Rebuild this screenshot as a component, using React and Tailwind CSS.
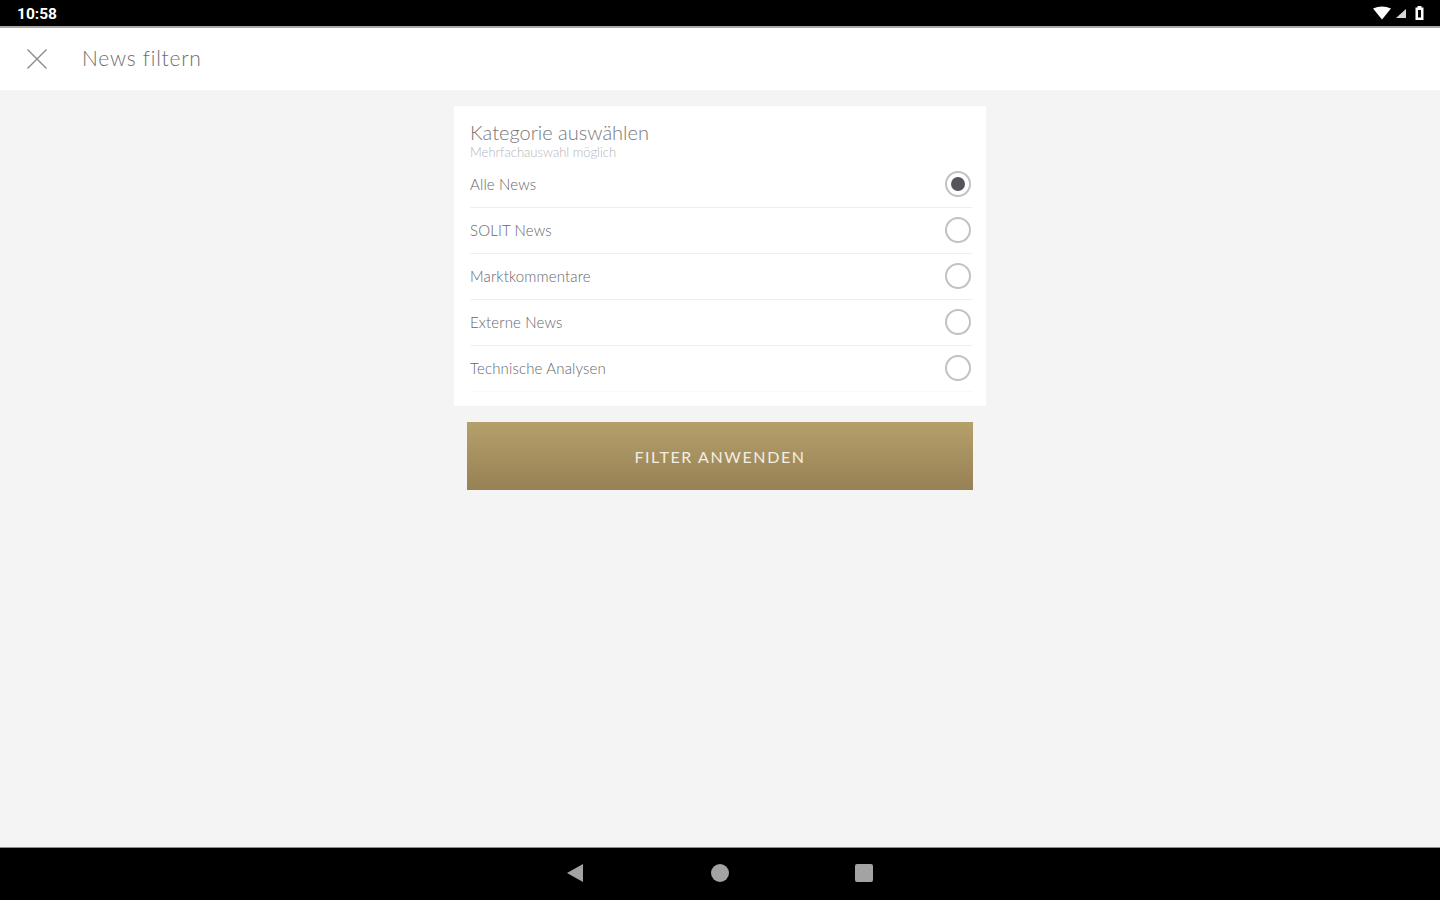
const rows = ["Alle News", "SOLIT News", "Marktkommentare", "Externe News", "Technische Analysen"];
const font = { fontFamily: '"Lato", "Liberation Sans", sans-serif' };

function Radio({ on }) {
  return (
    <span className="mb-[2px] flex h-[26px] w-[26px] shrink-0 items-center justify-center rounded-full border-2 border-[#c2c2c4] bg-white">
      {on && <span className="h-[14px] w-[14px] rounded-full bg-[#55555c]" />}
    </span>
  );
}

export default function App() {
  return (
    <div className="flex h-[900px] w-[1440px] flex-col overflow-hidden bg-[#f4f4f4]" style={font}>
      <div className="flex h-[26px] shrink-0 items-center justify-between bg-black pl-[17px] pr-[16px]">
        <span className="pt-[4px] text-[15.5px] font-bold leading-none text-white [font-family:'Roboto',sans-serif]">10:58</span>
        <div className="flex items-center gap-[3px]">
          <svg width="20" height="14" viewBox="0 0 20 14"><path d="M1 2.5 Q10 -1.5 19 2.5 L10 13.5 Z" fill="#fff" /></svg>
          <svg width="12" height="12" viewBox="0 0 12 12"><path d="M1 11 L11 2 V11 Z" fill="#d8d8d8" /></svg>
          <svg className="ml-[5px]" width="9" height="14" viewBox="0 0 9 14"><path fillRule="evenodd" d="M2.5 0h4v1.5H8.5V14H.5V1.5h2zM3 4v7.5h3V4z" fill="#fff" /></svg>
        </div>
      </div>
      <div className="h-[2px] shrink-0 bg-[#a9a9a9]" />
      <header className="flex h-[62px] shrink-0 items-center bg-white pl-[26px]">
        <svg width="22" height="22" viewBox="0 0 22 22" fill="none" stroke="#8b8b8b" strokeWidth="1.4"><path d="M1.5 1.5 20.5 20.5M20.5 1.5 1.5 20.5" /></svg>
        <h1 className="mb-[3px] ml-[34px] text-[21px] font-light leading-none tracking-[0.75px] text-[#6e6e6e]">News filtern</h1>
      </header>
      <main className="flex flex-1 flex-col items-center pt-4">
        <section className="w-[532px] bg-white pb-[14px] pl-4 pr-[14px] pt-[15px]">
          <h2 className="mb-[2px] text-[20px] font-light leading-[22px] text-[#77777a]">Kategorie auswählen</h2>
          <p className="text-[13px] font-light leading-[15px] text-[#b5b5b5]">Mehrfachauswahl möglich</p>
          <ul className="mt-[2px]">
            {rows.map((r, i) => (
              <li key={r} className={`flex h-[46px] items-center justify-between border-b pr-[1px] ${i === 4 ? "border-[#f9f9f9]" : "border-[#efefef]"}`}>
                <span className="text-[15px] font-light tracking-[0.15px] text-[#66666a]">{r}</span>
                <Radio on={i === 0} />
              </li>
            ))}
          </ul>
        </section>
        <button className="mt-4 flex h-[68px] w-[506px] items-center justify-center bg-gradient-to-b from-[#b5a06b] to-[#978155] pt-[2px] text-[16px] tracking-[1.6px] text-[#f3eee2]">
          FILTER ANWENDEN
        </button>
      </main>
      <nav className="flex h-[53px] shrink-0 items-center justify-center gap-[126px] border-t-[1px] border-[#8d8d8d] bg-black pb-[2px] pr-[2px]">
        <svg className="mr-[1px]" width="18" height="20" viewBox="0 0 18 20"><path d="M1 10 17 1V19Z" fill="#a3a3a3" /></svg>
        <span className="h-[18px] w-[18px] rounded-full bg-[#a3a3a3]" />
        <span className="h-[18px] w-[18px] rounded-[2px] bg-[#a3a3a3]" />
      </nav>
    </div>
  );
}
